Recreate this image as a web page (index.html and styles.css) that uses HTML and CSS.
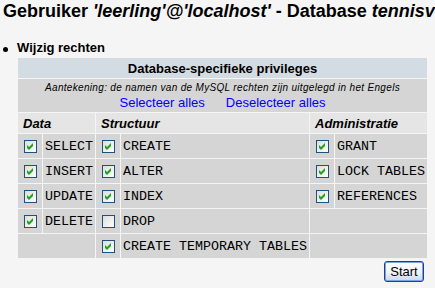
FILE: index.html
```html
<!DOCTYPE html>
<html>
<head>
<meta charset="utf-8">
<link rel="stylesheet" href="styles.css">
</head>
<body>
<h2 class="title">Gebruiker <i>'leerling'@'localhost'</i> - Database <i>tennisvereniging</i></h2>
<div class="section">
  <span class="bullet"></span>
  <span class="section-label">Wijzig rechten</span>
</div>
<div class="form">
<table class="privs">
  <colgroup>
    <col class="c-box"><col class="c-data"><col class="c-box"><col class="c-struct"><col class="c-box"><col class="c-admin">
  </colgroup>
  <tr class="row-head"><th colspan="6">Database-specifieke privileges</th></tr>
  <tr class="row-note">
    <td colspan="6">
      <div class="note"><i>Aantekening: de namen van de MySQL rechten zijn uitgelegd in het Engels</i></div>
      <div class="links"><a href="#">Selecteer alles</a><a href="#">Deselecteer alles</a></div>
    </td>
  </tr>
  <tr class="row-cols">
    <td colspan="2">Data</td>
    <td colspan="2">Structuur</td>
    <td colspan="2">Administratie</td>
  </tr>
  <tr class="row-priv">
    <td class="box"><svg class="cb" viewBox="0 0 13 13"><defs><linearGradient id="g" x1="0" y1="0" x2="1" y2="1"><stop offset="0" stop-color="#dcdcd7"/><stop offset="1" stop-color="#ffffff"/></linearGradient></defs><rect x="0.5" y="0.5" width="12" height="12" fill="url(#g)" stroke="#1c5180"/><polygon points="3,5 5,7 9,3 9,6 5,10 3,8" fill="#21a121"/></svg></td>
    <td class="lbl">SELECT</td>
    <td class="box"><svg class="cb" viewBox="0 0 13 13"><rect x="0.5" y="0.5" width="12" height="12" fill="url(#g)" stroke="#1c5180"/><polygon points="3,5 5,7 9,3 9,6 5,10 3,8" fill="#21a121"/></svg></td>
    <td class="lbl">CREATE</td>
    <td class="box"><svg class="cb" viewBox="0 0 13 13"><rect x="0.5" y="0.5" width="12" height="12" fill="url(#g)" stroke="#1c5180"/><polygon points="3,5 5,7 9,3 9,6 5,10 3,8" fill="#21a121"/></svg></td>
    <td class="lbl">GRANT</td>
  </tr>
  <tr class="row-priv">
    <td class="box"><svg class="cb" viewBox="0 0 13 13"><rect x="0.5" y="0.5" width="12" height="12" fill="url(#g)" stroke="#1c5180"/><polygon points="3,5 5,7 9,3 9,6 5,10 3,8" fill="#21a121"/></svg></td>
    <td class="lbl">INSERT</td>
    <td class="box"><svg class="cb" viewBox="0 0 13 13"><rect x="0.5" y="0.5" width="12" height="12" fill="url(#g)" stroke="#1c5180"/><polygon points="3,5 5,7 9,3 9,6 5,10 3,8" fill="#21a121"/></svg></td>
    <td class="lbl">ALTER</td>
    <td class="box"><svg class="cb" viewBox="0 0 13 13"><rect x="0.5" y="0.5" width="12" height="12" fill="url(#g)" stroke="#1c5180"/><polygon points="3,5 5,7 9,3 9,6 5,10 3,8" fill="#21a121"/></svg></td>
    <td class="lbl">LOCK TABLES</td>
  </tr>
  <tr class="row-priv">
    <td class="box"><svg class="cb" viewBox="0 0 13 13"><rect x="0.5" y="0.5" width="12" height="12" fill="url(#g)" stroke="#1c5180"/><polygon points="3,5 5,7 9,3 9,6 5,10 3,8" fill="#21a121"/></svg></td>
    <td class="lbl">UPDATE</td>
    <td class="box"><svg class="cb" viewBox="0 0 13 13"><rect x="0.5" y="0.5" width="12" height="12" fill="url(#g)" stroke="#1c5180"/><polygon points="3,5 5,7 9,3 9,6 5,10 3,8" fill="#21a121"/></svg></td>
    <td class="lbl">INDEX</td>
    <td class="box"><svg class="cb" viewBox="0 0 13 13"><rect x="0.5" y="0.5" width="12" height="12" fill="url(#g)" stroke="#1c5180"/><polygon points="3,5 5,7 9,3 9,6 5,10 3,8" fill="#21a121"/></svg></td>
    <td class="lbl">REFERENCES</td>
  </tr>
  <tr class="row-priv">
    <td class="box"><svg class="cb" viewBox="0 0 13 13"><rect x="0.5" y="0.5" width="12" height="12" fill="url(#g)" stroke="#1c5180"/><polygon points="3,5 5,7 9,3 9,6 5,10 3,8" fill="#21a121"/></svg></td>
    <td class="lbl">DELETE</td>
    <td class="box"><svg class="cb" viewBox="0 0 13 13"><rect x="0.5" y="0.5" width="12" height="12" fill="url(#g)" stroke="#1c5180"/></svg></td>
    <td class="lbl">DROP</td>
    <td colspan="2"></td>
  </tr>
  <tr class="row-priv">
    <td colspan="2"></td>
    <td class="box"><svg class="cb" viewBox="0 0 13 13"><rect x="0.5" y="0.5" width="12" height="12" fill="url(#g)" stroke="#1c5180"/><polygon points="3,5 5,7 9,3 9,6 5,10 3,8" fill="#21a121"/></svg></td>
    <td class="lbl">CREATE TEMPORARY TABLES</td>
    <td colspan="2"></td>
  </tr>
</table>
<div class="footer"><button class="btn" type="button">Start</button></div>
</div>
</body>
</html>
```

FILE: styles.css
```css
html, body {
  margin: 0;
  padding: 0;
  background: #f5f5f5;
  overflow: hidden;
}
body {
  padding-top: 1px;
  font-family: "Liberation Sans", Arial, sans-serif;
  color: #000;
}
.title {
  margin: 0;
  padding-left: 3px;
  font-size: 18px;
  line-height: 20px;
  font-weight: bold;
  white-space: nowrap;
}
.section {
  display: flex;
  align-items: center;
  margin-top: 19px;
  height: 15px;
}
.bullet {
  width: 5px;
  height: 5px;
  border-radius: 50%;
  background: #000;
  margin-left: 3px;
  margin-right: 9px;
  margin-top: 4px;
}
.section-label {
  font-size: 13px;
  line-height: 15px;
  font-weight: bold;
}
.form {
  margin-left: 17px;
  margin-top: 2px;
  width: 411px;
}
.privs {
  table-layout: fixed;
  width: 411px;
  border-collapse: separate;
  border-spacing: 1px;
  font-size: 13px;
}
.c-box { width: 24px; }
.c-data { width: 52px; }
.c-struct { width: 188px; }
.c-admin { width: 92px; }
.privs th, .privs td {
  padding: 0;
}
.row-head th {
  background: #d3dce3;
  height: 20px;
  font-weight: bold;
  text-align: center;
  line-height: 15px;
}
.row-note td {
  background: #d5d5d5;
  height: 33px;
  box-sizing: border-box;
  padding: 2px 0 1px;
  text-align: center;
}
.note {
  font-size: 10px;
  line-height: 13px;
  letter-spacing: 0.32px;
  white-space: nowrap;
}
.links {
  display: flex;
  justify-content: center;
  gap: 21px;
  font-size: 13px;
  line-height: 17px;
}
.links a {
  color: #0000ff;
  text-decoration: none;
}
.row-cols td {
  background: #e5e5e5;
  height: 20px;
  padding-left: 5px;
  font-weight: bold;
  font-style: italic;
  line-height: 15px;
}
.row-priv td {
  background: #d5d5d5;
  height: 24px;
}
.box {
  text-align: center;
}
.cb {
  display: block;
  width: 13px;
  height: 13px;
  margin: 0 5px 0 6px;
}
.lbl {
  font-family: "Liberation Mono", "Courier New", monospace;
  font-size: 13.33px;
  padding-left: 2px !important;
  white-space: nowrap;
}
.footer {
  display: flex;
  justify-content: flex-end;
  padding-right: 4px;
  margin-top: 2px;
}
.btn {
  width: 40px;
  height: 21px;
  padding: 0;
  font-family: "Liberation Sans", Arial, sans-serif;
  font-size: 13px;
  color: #000;
  border: 1px solid #1f3f8c;
  border-radius: 3px;
  box-shadow: inset 0 0 0 1px #7ea2e6;
  background: linear-gradient(#ffffff, #eef2fa 55%, #c9d6ef);
}
```
